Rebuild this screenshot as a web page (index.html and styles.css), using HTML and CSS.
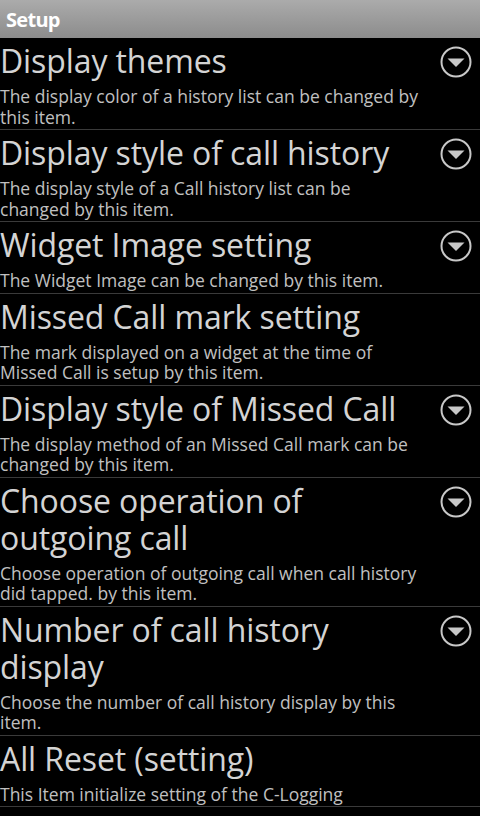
FILE: index.html
```html
<!DOCTYPE html>
<html lang="en">
<head>
  <meta charset="UTF-8" />
  <meta name="viewport" content="width=device-width, initial-scale=1.0"/>
  <title>Setup</title>
  <link rel="stylesheet" href="styles.css">
</head>
<body>

<!-- Title bar -->
<header class="title-bar">
  <h1>Setup</h1>
</header>

<!-- Settings list -->
<ul class="pref-list">
  <li class="pref">
    <div class="pref-text">
      <div class="pref-title">Display themes</div>
      <div class="pref-summary">The display color of a history list can be changed by this item.</div>
    </div>
    <span class="pref-arrow"><svg viewBox="0 0 32 32"><circle cx="16" cy="16" r="14.5"/><path d="M7.5 12.5h17l-8.5 8.5z"/></svg></span>
  </li>
  <li class="pref">
    <div class="pref-text">
      <div class="pref-title">Display style of call history</div>
      <div class="pref-summary">The display style of a Call history list can be changed by this item.</div>
    </div>
    <span class="pref-arrow"><svg viewBox="0 0 32 32"><circle cx="16" cy="16" r="14.5"/><path d="M7.5 12.5h17l-8.5 8.5z"/></svg></span>
  </li>
  <li class="pref">
    <div class="pref-text">
      <div class="pref-title">Widget Image setting</div>
      <div class="pref-summary">The Widget Image can be changed by this item.</div>
    </div>
    <span class="pref-arrow"><svg viewBox="0 0 32 32"><circle cx="16" cy="16" r="14.5"/><path d="M7.5 12.5h17l-8.5 8.5z"/></svg></span>
  </li>
  <li class="pref">
    <div class="pref-text">
      <div class="pref-title">Missed Call mark setting</div>
      <div class="pref-summary">The mark displayed on a widget at the time of Missed Call is setup by this item.</div>
    </div>
  </li>
  <li class="pref">
    <div class="pref-text">
      <div class="pref-title">Display style of Missed Call</div>
      <div class="pref-summary">The display method of an Missed Call mark can be changed by this item.</div>
    </div>
    <span class="pref-arrow"><svg viewBox="0 0 32 32"><circle cx="16" cy="16" r="14.5"/><path d="M7.5 12.5h17l-8.5 8.5z"/></svg></span>
  </li>
  <li class="pref">
    <div class="pref-text">
      <div class="pref-title">Choose operation of outgoing call</div>
      <div class="pref-summary">Choose operation of outgoing call when call history did tapped. by this item.</div>
    </div>
    <span class="pref-arrow"><svg viewBox="0 0 32 32"><circle cx="16" cy="16" r="14.5"/><path d="M7.5 12.5h17l-8.5 8.5z"/></svg></span>
  </li>
  <li class="pref">
    <div class="pref-text">
      <div class="pref-title">Number of call history display</div>
      <div class="pref-summary">Choose the number of call history display by this item.</div>
    </div>
    <span class="pref-arrow"><svg viewBox="0 0 32 32"><circle cx="16" cy="16" r="14.5"/><path d="M7.5 12.5h17l-8.5 8.5z"/></svg></span>
  </li>
  <li class="pref">
    <div class="pref-text">
      <div class="pref-title">All Reset (setting)</div>
      <div class="pref-summary">This Item initialize setting of the C-Logging</div>
    </div>
  </li>
</ul>

</body>
</html>
```

FILE: styles.css
```css
body {
  margin: 0;
  padding: 0;
  background: #000;
  font-family: 'Open Sans', 'DejaVu Sans', sans-serif;
  width: 480px;
  height: 816px;
  overflow: hidden;
}

.title-bar {
  height: 38px;
  background: linear-gradient(to bottom, #ababab, #8c8c8c);
  display: flex;
  align-items: center;
  padding: 0 6px;
}

.title-bar h1 {
  margin: 0;
  font-size: 20px;
  font-weight: 700;
  color: #fff;
  letter-spacing: -0.7px;
}

.pref-list {
  list-style: none;
  margin: 0;
  padding: 0;
}

.pref {
  display: flex;
  align-items: flex-start;
  padding: 4px 0 2px;
  border-bottom: 1px solid #3a3a3a;
}

.pref-text {
  flex: none;
  width: 418px;
}

.pref-title {
  font-size: 32px;
  line-height: 37px;
  color: #d4d4d4;
  letter-spacing: -0.1px;
}

.pref-summary {
  font-size: 17.5px;
  line-height: 20.5px;
  color: #c0c0c0;
  margin-top: 7px;
}

.pref-arrow {
  flex: none;
  width: 32px;
  height: 32px;
  margin: 4px 8px 0 auto;
}

.pref-arrow svg {
  display: block;
  width: 32px;
  height: 32px;
}

.pref-arrow circle {
  fill: none;
  stroke: #c8c8c8;
  stroke-width: 2;
}

.pref-arrow path {
  fill: #c8c8c8;
}
```
